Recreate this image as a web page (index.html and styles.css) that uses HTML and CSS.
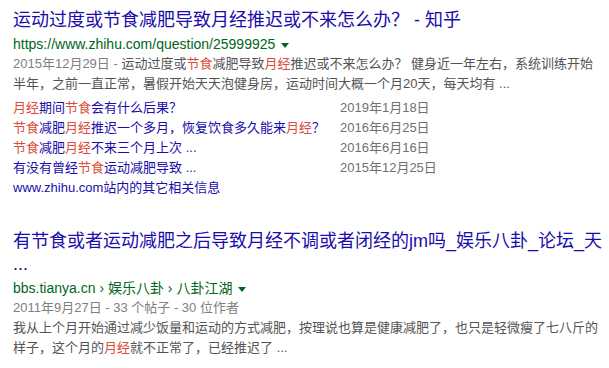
FILE: index.html
```html
<!DOCTYPE html>
<html lang="zh-CN">
<head>
    <meta charset="UTF-8">
    <meta name="viewport" content="width=device-width, initial-scale=1.0">
    <title>搜索结果</title>
    <link rel="stylesheet" href="styles.css">
</head>
<body>
    <div class="results">
        <div class="result">
            <a class="title" href="#">运动过度或节食减肥导致月经推迟或不来怎么办？ - 知乎</a>
            <div class="url">https://www.zhihu.com/question/25999925<span class="arrow"></span></div>
            <div class="snippet"><span class="date">2015年12月29日 - </span>运动过度或<em>节食</em>减肥导致<em>月经</em>推迟或不来怎么办？ 健身近一年左右，系统训练开始半年，之前一直正常，暑假开始天天泡健身房，运动时间大概一个月20天，每天均有 ...</div>
            <div class="sublinks">
                <a href="#"><em>月经</em>期间<em>节食</em>会有什么后果？</a><span>2019年1月18日</span>
                <a href="#"><em>节食</em>减肥<em>月经</em>推迟一个多月，恢复饮食多久能来<em>月经</em>？</a><span>2016年6月25日</span>
                <a href="#"><em>节食</em>减肥<em>月经</em>不来三个月上次 ...</a><span>2016年6月16日</span>
                <a href="#">有没有曾经<em>节食</em>运动减肥导致 ...</a><span>2015年12月25日</span>
            </div>
            <a class="more" href="#">www.zhihu.com站内的其它相关信息</a>
        </div>

        <div class="result">
            <a class="title" href="#">有节食或者运动减肥之后导致月经不调或者闭经的jm吗_娱乐八卦_论坛_天 ...</a>
            <div class="url">bbs.tianya.cn › 娱乐八卦 › 八卦江湖<span class="arrow"></span></div>
            <div class="meta">2011年9月27日 - 33 个帖子 - 30 位作者</div>
            <div class="snippet">我从上个月开始通过减少饭量和运动的方式减肥，按理说也算是健康减肥了，也只是轻微瘦了七八斤的样子，这个月的<em>月经</em>就不正常了，已经推迟了 ...</div>
        </div>
    </div>
</body>
</html>
```

FILE: styles.css
```css
body {
    margin: 0;
    padding: 9px 0 0 13px;
    font-family: "Liberation Sans", "Noto Sans CJK SC", sans-serif;
    background: #fff;
    color: #545454;
}
a {
    text-decoration: none;
    color: #1a0dab;
}
em {
    font-style: normal;
    color: #dd4b39;
}
.results {
    width: 592px;
}
.result + .result {
    margin-top: 32px;
}
.title {
    display: block;
    font-size: 18px;
    line-height: 23px;
}
.url {
    margin-top: 2px;
    font-size: 14px;
    line-height: 20px;
    color: #006621;
}
.arrow {
    display: inline-block;
    margin-left: 6px;
    vertical-align: middle;
    border-left: 4px solid transparent;
    border-right: 4px solid transparent;
    border-top: 5px solid #006621;
}
.snippet, .meta {
    font-size: 13px;
    line-height: 20px;
}
.date, .meta {
    color: #808080;
}
.sublinks {
    display: grid;
    grid-template-columns: 327px auto;
    margin-top: 4px;
    font-size: 13px;
    line-height: 20px;
}
.sublinks span {
    color: #707070;
}
.more {
    display: block;
    font-size: 13px;
    line-height: 20px;
}
```
